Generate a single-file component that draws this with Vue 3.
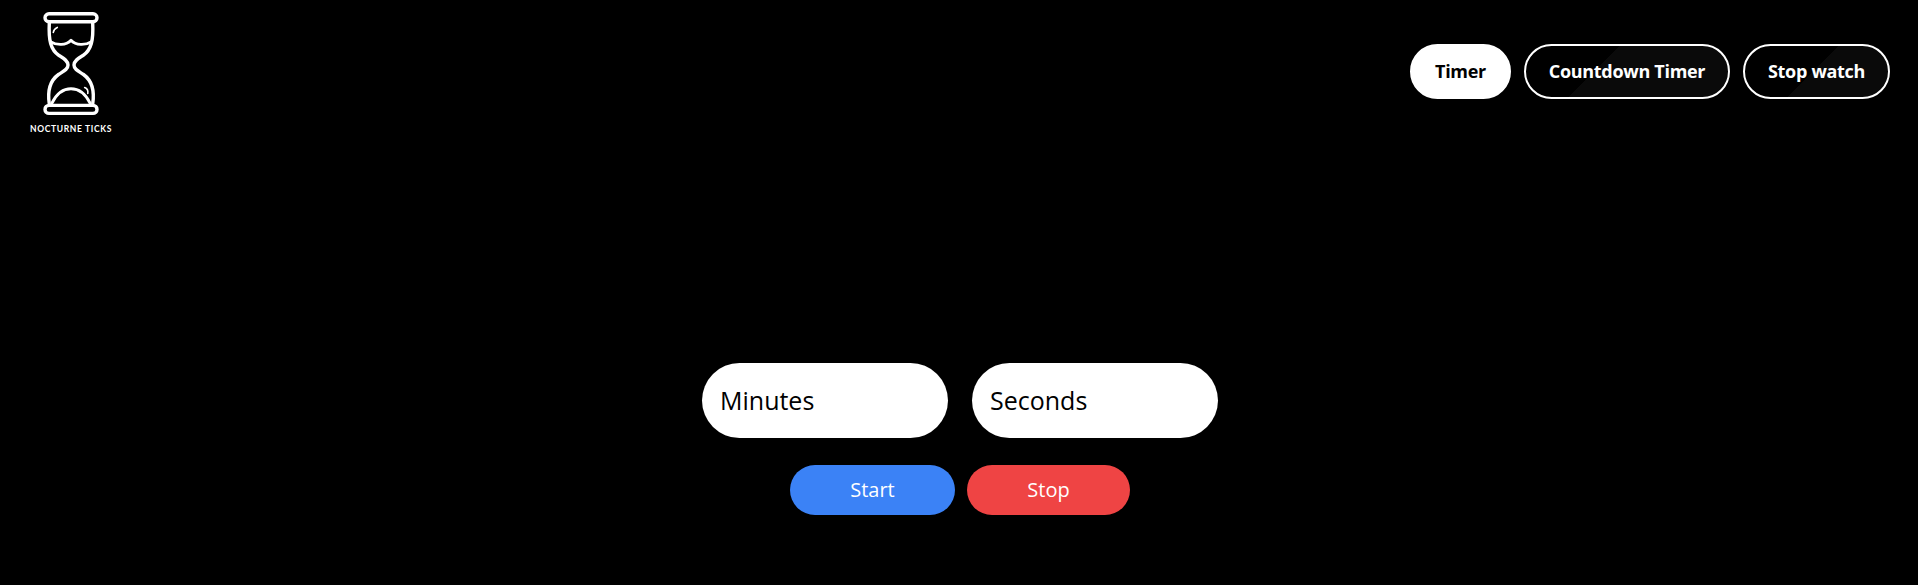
<script setup>
import { ref } from 'vue'

const tabs = [
  { id: 'timer', label: 'Timer' },
  { id: 'countdown', label: 'Countdown Timer' },
  { id: 'stopwatch', label: 'Stop watch' },
]
const active = ref('timer')
const minutes = ref('')
const seconds = ref('')
</script>

<template>
  <div class="page">
    <header class="header">
      <div class="logo">
        <svg class="glass" viewBox="0 0 60 108" fill="none" stroke="#fff" stroke-width="3.4" stroke-linecap="round" stroke-linejoin="round">
          <rect x="4" y="1.8" width="52" height="8" rx="4" />
          <rect x="4" y="93.4" width="52" height="8" rx="4" />
          <path d="M8.300 11C7.500 28 9.500 38 18 43.500C22 46 27 48.500 27 53C27 57.500 22 59.500 17.500 62.500C8.500 69 6.500 80 8.300 92" />
          <path d="M51.700 11C52.500 28 50.500 38 42 43.500C38 46 33 48.500 33 53C33 57.500 38 59.500 42.500 62.500C51.500 69 53.500 80 51.700 92" />
          <path d="M9.500 29.700C16 33.500 25 33.500 30 28.200C35 33.500 44 33.500 50.500 29.700" stroke-width="2.8" />
          <path d="M11 91C20.500 72 39.500 72 49 91" stroke-width="2.8" />
          <path d="M12.300 20.500Q12.800 16.800 16.300 15.400M43.700 75.500Q47.500 77 46.800 81.500" stroke-width="1.6" />
        </svg>
        <span class="brand">NOCTURNE TICKS</span>
      </div>
      <nav class="tabs">
        <button v-for="tab in tabs" :key="tab.id" :class="['tab', tab.id, { active: active === tab.id }]" @click="active = tab.id">{{ tab.label }}</button>
      </nav>
    </header>
    <main class="timer-panel">
      <div class="fields">
        <input v-model="minutes" class="field" placeholder="Minutes" />
        <input v-model="seconds" class="field" placeholder="Seconds" />
      </div>
      <div class="actions">
        <button class="action start">Start</button>
        <button class="action stop">Stop</button>
      </div>
    </main>
  </div>
</template>

<style>
body { background: #000; }
</style>

<style scoped>
.page { height: 585px; background: #000; font-family: "Open Sans", "Noto Sans", sans-serif; overflow: hidden; }
.header { height: 143px; display: flex; align-items: center; justify-content: space-between; padding: 0 28px 0 20px; box-sizing: border-box; }
.logo { width: 102px; height: 143px; display: flex; flex-direction: column; align-items: center; padding-top: 12px; box-sizing: border-box; }
.glass { width: 60px; height: 108px; flex: none; }
.brand { margin-top: 4px; color: #fff; font: 700 8.5px/10px Lato, sans-serif; letter-spacing: 0.66px; white-space: nowrap; }
.tabs { display: flex; gap: 13px; }
.tab { height: 55px; padding: 0; border: 2px solid #fff; border-radius: 28px; color: #fff; font: 700 18px/27px "Open Sans", sans-serif; letter-spacing: -0.3px; }
.tab.timer { width: 101px; }
.tab.countdown { width: 206px; background: linear-gradient(135deg, #000 37%, #0a0a0a 37%); }
.tab.stopwatch { width: 147px; background: linear-gradient(135deg, #000 48%, #0a0a0a 48%); }
.tab.active { background: #fff; color: #000; }
.timer-panel { padding: 220px 0 0 2px; display: flex; flex-direction: column; align-items: center; gap: 27px; }
.fields { display: flex; gap: 24px; }
.field { width: 246px; height: 75px; box-sizing: border-box; border: 0; border-radius: 38px; background: #fff; padding: 0 18px 1px; color: #000; font: 400 25px/36px "Open Sans", sans-serif; outline: none; }
.field::placeholder { color: #000; opacity: 1; }
.actions { display: flex; gap: 12px; }
.action { height: 50px; padding: 0; border: 0; border-radius: 25px; color: #fff; font: 400 20px/28px "Open Sans", sans-serif; }
.start { width: 165px; background: #3b82f6; }
.stop { width: 163px; background: #ef4444; }
</style>
